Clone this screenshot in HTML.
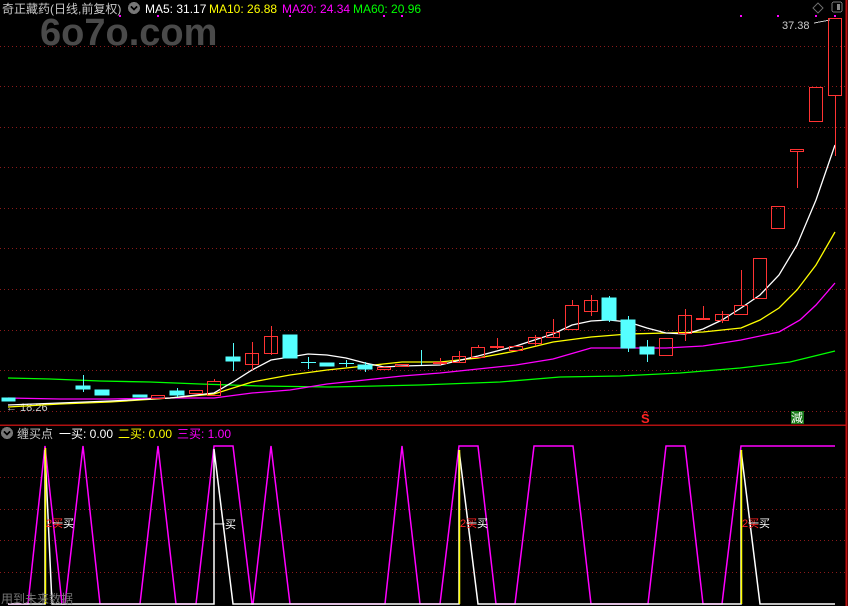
<!DOCTYPE html>
<html><head><meta charset="utf-8"><style>
html,body{margin:0;padding:0;background:#000;width:848px;height:606px;overflow:hidden}
svg{display:block}
text{font-family:"Liberation Sans","Noto Sans CJK SC",sans-serif}
</style></head><body>
<svg width="848" height="606" viewBox="0 0 848 606" xmlns="http://www.w3.org/2000/svg" shape-rendering="crispEdges">
<rect width="848" height="606" fill="#000"/>
<!-- grid -->
<g stroke="#8a1a1a" stroke-width="1" stroke-dasharray="1,3">
<line x1="0" y1="46.5" x2="845" y2="46.5"/><line x1="0" y1="86.5" x2="845" y2="86.5"/>
<line x1="0" y1="127.5" x2="845" y2="127.5"/><line x1="0" y1="167.5" x2="845" y2="167.5"/>
<line x1="0" y1="208.5" x2="845" y2="208.5"/><line x1="0" y1="248.5" x2="845" y2="248.5"/>
<line x1="0" y1="289.5" x2="845" y2="289.5"/><line x1="0" y1="330.5" x2="845" y2="330.5"/>
<line x1="0" y1="370.5" x2="845" y2="370.5"/><line x1="0" y1="411.5" x2="845" y2="411.5"/>
<line x1="0" y1="477.5" x2="845" y2="477.5"/><line x1="0" y1="509.5" x2="845" y2="509.5"/>
<line x1="0" y1="540.5" x2="845" y2="540.5"/><line x1="0" y1="572.5" x2="845" y2="572.5"/>
</g>
<line x1="0" y1="425" x2="846" y2="425" stroke="#b01010" stroke-width="1.5"/>
<line x1="846.5" y1="0" x2="846.5" y2="606" stroke="#c01010" stroke-width="2"/>
<!-- watermark -->
<text x="40" y="45" font-size="38" font-weight="bold" fill="#4a4a4a">6o7o.com</text>
<!-- header -->
<text x="2" y="13" font-size="12" fill="#c8c8c8">奇正藏药(日线,前复权)</text>
<circle cx="134" cy="8" r="6" fill="#777"/><path d="M131 6.5l3 3 3-3" stroke="#000" stroke-width="1.5" fill="none"/>
<text x="145" y="13" font-size="12" fill="#fff">MA5: 31.17</text>
<text x="209" y="13" font-size="12" fill="#ff0">MA10: 26.88</text>
<text x="282" y="13" font-size="12" fill="#f0f">MA20: 24.34</text>
<text x="353" y="13" font-size="12" fill="#0f0">MA60: 20.96</text>
<g fill="#f0f"><rect x="119" y="15" width="2" height="2"/><rect x="157" y="15" width="2" height="2"/><rect x="289" y="15" width="2" height="2"/><rect x="383" y="15" width="2" height="2"/><rect x="401" y="15" width="2" height="2"/><rect x="740" y="15" width="2" height="2"/><rect x="777" y="15" width="2" height="2"/><rect x="815" y="15" width="2" height="2"/><rect x="834" y="15" width="2" height="2"/></g>
<path d="M818 3l5 5-5 5-5-5z" stroke="#666" fill="none"/>
<rect x="832" y="2" width="10" height="10" rx="2" stroke="#777" fill="none"/><rect x="837" y="4" width="3" height="6" fill="#888"/>
<text x="782" y="29" font-size="11" fill="#ccc">37.38</text>
<line x1="814" y1="23" x2="830" y2="20" stroke="#ccc"/>
<text x="6" y="411" font-size="11" fill="#ccc">← 18.26</text>
<!-- MA lines -->
<g fill="none" stroke-width="1.3" shape-rendering="auto">
<polyline stroke="#0f0" points="8,378 50,379 100,381 150,382 200,384 260,386 330,387 420,385 500,382 560,377 620,376 680,373 740,368 790,362 835,351"/>
<polyline stroke="#f0f" points="8,398 60,399 110,399 170,398 214,398 252,393 290,390 327,384 365,380 402,376 440,373 478,369 516,365 553,359 591,348 628,348 666,348 703,346 741,340 779,332 800,320 816,305 835,283"/>
<polyline stroke="#ff0" points="8,407 60,404 110,402 170,398 214,394 252,382 290,375 327,370 365,366 402,362 440,362 478,358 516,351 553,342 591,337 628,334 666,333 703,332 741,328 760,320 779,308 797,290 816,265 835,232"/>
<polyline stroke="#fff" points="8,405 60,403 110,401 170,398 214,393 233,382 252,370 271,360 290,357 308,354 327,355 346,358 365,363 384,367 402,366 440,365 478,356 516,346 553,334 572,325 591,321 609,320 628,322 647,328 666,333 685,334 703,329 722,320 741,308 760,295 779,275 797,245 816,200 835,145"/>
</g>
<!-- candles -->
<g stroke-width="1">
<g fill="#5ff" stroke="#5ff">
<rect x="2" y="398" width="13" height="3"/>
<line x1="83.5" y1="375" x2="83.5" y2="392"/><rect x="76" y="386" width="14" height="3"/>
<rect x="95" y="390" width="14" height="5"/>
<rect x="133" y="395" width="14" height="2"/>
<line x1="177.5" y1="388" x2="177.5" y2="397"/><rect x="170" y="391" width="14" height="4"/>
<line x1="233.5" y1="343" x2="233.5" y2="371"/><rect x="226" y="357" width="14" height="4"/>
<rect x="283" y="335" width="14" height="23"/>
<line x1="308.5" y1="357" x2="308.5" y2="369"/><line x1="301" y1="362.5" x2="316" y2="362.5"/>
<rect x="320" y="363" width="14" height="3"/>
<line x1="346.5" y1="360" x2="346.5" y2="367"/><line x1="339" y1="363.5" x2="354" y2="363.5"/>
<line x1="365.5" y1="362" x2="365.5" y2="372"/><rect x="358" y="365" width="14" height="4"/>
<line x1="421.5" y1="350" x2="421.5" y2="365"/>
<line x1="609.5" y1="296" x2="609.5" y2="322"/><rect x="602" y="298" width="14" height="22"/>
<line x1="628.5" y1="316" x2="628.5" y2="352"/><rect x="621" y="320" width="14" height="28"/>
<line x1="647.5" y1="340" x2="647.5" y2="362"/><rect x="640" y="347" width="14" height="7"/>
</g>
<g fill="none" stroke="#f33">
<rect x="151.5" y="395.5" width="13" height="3"/>
<rect x="189.5" y="390.5" width="13" height="3"/>
<line x1="214.5" y1="379" x2="214.5" y2="381"/><rect x="207.5" y="381.5" width="13" height="14"/>
<line x1="252.5" y1="342" x2="252.5" y2="370"/><rect x="245.5" y="353.5" width="13" height="11"/>
<line x1="271.5" y1="326" x2="271.5" y2="355"/><rect x="264.5" y="336.5" width="13" height="17"/>
<rect x="377.5" y="367.5" width="13" height="2"/>
<rect x="395.5" y="364.5" width="13" height="2"/>
<line x1="440.5" y1="358" x2="440.5" y2="365"/><rect x="433.5" y="362.5" width="13" height="1"/>
<line x1="459.5" y1="351" x2="459.5" y2="363"/><rect x="452.5" y="356.5" width="13" height="6"/>
<line x1="478.5" y1="345" x2="478.5" y2="347"/><rect x="471.5" y="347.5" width="13" height="10"/>
<line x1="497.5" y1="338" x2="497.5" y2="349"/><rect x="490.5" y="346.5" width="13" height="1"/>
<rect x="509.5" y="346.5" width="13" height="4"/>
<line x1="535.5" y1="335" x2="535.5" y2="346"/><rect x="528.5" y="337.5" width="13" height="6"/>
<line x1="553.5" y1="319" x2="553.5" y2="337"/><rect x="546.5" y="332.5" width="13" height="5"/>
<line x1="572.5" y1="300" x2="572.5" y2="305"/><rect x="565.5" y="305.5" width="13" height="24"/>
<line x1="591.5" y1="295" x2="591.5" y2="316"/><rect x="584.5" y="300.5" width="13" height="11"/>
<rect x="659.5" y="338.5" width="13" height="17"/>
<line x1="685.5" y1="309" x2="685.5" y2="341"/><rect x="678.5" y="315.5" width="13" height="18"/>
<line x1="703.5" y1="306" x2="703.5" y2="318"/><rect x="696.5" y="318.5" width="13" height="1"/>
<line x1="722.5" y1="311" x2="722.5" y2="323"/><rect x="715.5" y="314.5" width="13" height="6"/>
<line x1="741.5" y1="270" x2="741.5" y2="305"/><rect x="734.5" y="305.5" width="13" height="9"/>
<rect x="753.5" y="258.5" width="13" height="40"/>
<rect x="771.5" y="206.5" width="13" height="22"/>
<line x1="797.5" y1="151" x2="797.5" y2="188"/><rect x="790.5" y="149.5" width="13" height="2"/>
<rect x="809.5" y="87.5" width="13" height="34"/>
<line x1="835.5" y1="95" x2="835.5" y2="156"/><rect x="828.5" y="18.5" width="13" height="77"/>
</g>
</g>
<text x="641" y="423" font-size="13" font-weight="bold" fill="#f22">Ŝ</text>
<rect x="791" y="411" width="13" height="13" fill="#1a7a1a"/><text x="791" y="422" font-size="12" fill="#fff">減</text>
<!-- lower panel header -->
<circle cx="7" cy="433" r="6" fill="#777"/><path d="M4 431.5l3 3 3-3" stroke="#000" stroke-width="1.5" fill="none"/>
<text x="17" y="438" font-size="12" fill="#c8c8c8">缠买点</text>
<text x="59" y="438" font-size="12" fill="#fff">一买: 0.00</text>
<text x="118" y="438" font-size="12" fill="#ff0">二买: 0.00</text>
<text x="177" y="438" font-size="12" fill="#f0f">三买: 1.00</text>
<!-- lower indicator -->
<g fill="none" stroke-width="1.5" shape-rendering="auto">
<polyline stroke="#f0f" points="8,604 28,604 45,446 62,604 65,604 83,446 100,604 140,604 158,446 176,604 196,604 214,446 233,446 252,604 253,604 271,446 290,604 385,604 402,446 420,604 440,604 459,446 478,446 496,604 515,604 534,446 573,446 591,604 648,604 666,446 685,446 703,604 722,604 741,446 835,446"/>
<polyline stroke="#fff" points="8,604 45,604 45,450 52,604 214,604 214,449 233,604 459,604 459,450 478,604 741,604 741,450 760,604 835,604"/>
<g stroke="#ff0"><line x1="45.5" y1="448" x2="45.5" y2="604"/><line x1="459.5" y1="450" x2="459.5" y2="604"/><line x1="741.5" y1="450" x2="741.5" y2="604"/></g>
</g>
<g font-size="11">
<text x="46" y="527" fill="#f22">2买</text><text x="52" y="527" fill="#fff">一买</text>
<text x="214" y="528" fill="#fff">一买</text>
<text x="460" y="527" fill="#f22">2买</text><text x="466" y="527" fill="#fff">一买</text>
<text x="742" y="527" fill="#f22">2买</text><text x="748" y="527" fill="#fff">一买</text>
</g>
<text x="1" y="603" font-size="12" fill="#777">用到未来数据</text>
</svg>
</body></html>
